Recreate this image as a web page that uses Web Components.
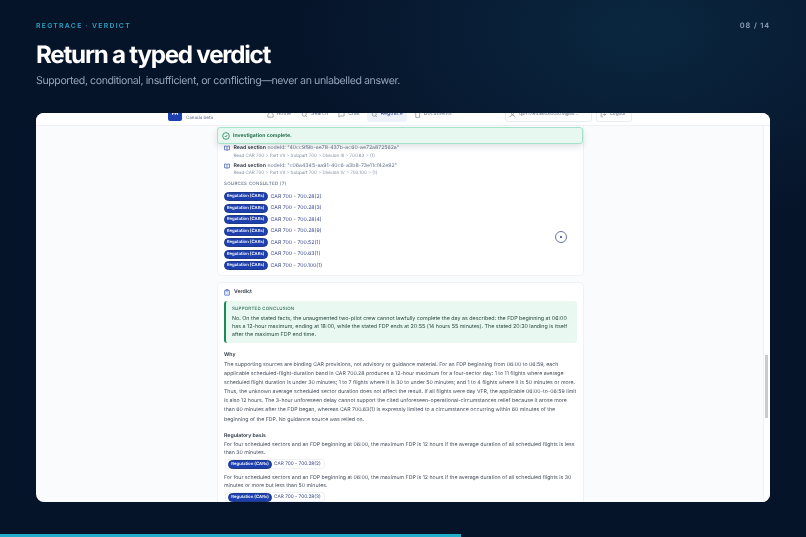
<!DOCTYPE html>
<html lang="en">
<head>
<meta charset="utf-8">
<title>Return a typed verdict</title>
<style>
  html, body { margin: 0; height: 100%; }
  body { background: #06142a; font-family: Inter, "Liberation Sans", sans-serif; text-rendering: geometricPrecision; overflow: hidden; }
</style>
</head>
<body>
<deck-slide>
  <slide-header slot="header" eyebrow="REGTRACE · VERDICT" page="08 / 14" heading="Return a typed verdict"
    sub="Supported, conditional, insufficient, or conflicting—never an unlabelled answer."></slide-header>
  <app-frame>
    <app-nav slot="nav"></app-nav>
    <section-card>
      <read-step node='"40cc9f9b-ae78-437b-ac60-ae72a872562a"' path="Read CAR 700 &gt; Part VII &gt; Subpart 700 &gt; Division III &gt; 700.63 &gt; (1)"></read-step>
      <read-step node='"c06a4345-aa91-40c6-a3b8-73e11cf42e92"' path="Read CAR 700 &gt; Part VII &gt; Subpart 700 &gt; Division IV &gt; 700.100 &gt; (1)"></read-step>
      <sources-list>
        <source-row ref="CAR 700 - 700.28(2)"></source-row>
        <source-row ref="CAR 700 - 700.28(3)"></source-row>
        <source-row ref="CAR 700 - 700.28(4)"></source-row>
        <source-row ref="CAR 700 - 700.28(9)"></source-row>
        <source-row ref="CAR 700 - 700.52(1)"></source-row>
        <source-row ref="CAR 700 - 700.63(1)"></source-row>
        <source-row ref="CAR 700 - 700.100(1)"></source-row>
      </sources-list>
    </section-card>
    <verdict-card>
      <verdict-callout>No. On the stated facts, the unaugmented two-pilot crew cannot lawfully complete the day as described: the FDP beginning at 06:00 has a 12-hour maximum, ending at 18:00, while the stated FDP ends at 20:55 (14 hours 55 minutes). The stated 20:30 landing is itself after the maximum FDP end time.</verdict-callout>
      <verdict-block heading="Why" style="--lh:9.17px">
        <p>The supporting sources are binding CAR provisions, not advisory or guidance material. For an FDP beginning from 06:00 to 06:59, each applicable scheduled-flight-duration band in CAR 700.28 produces a 12-hour maximum for a four-sector day: 1 to 11 flights where average scheduled flight duration is under 30 minutes; 1 to 7 flights where it is 30 to under 50 minutes; and 1 to 4 flights where it is 50 minutes or more. Thus, the unknown average scheduled sector duration does not affect the result. If all flights were day VFR, the applicable 06:00-to-06:59 limit is also 12 hours. The 3-hour unforeseen delay cannot support the cited unforeseen-operational-circumstances relief because it arose more than 60 minutes after the FDP began, whereas CAR 700.63(1) is expressly limited to a circumstance occurring within 60 minutes of the beginning of the FDP. No guidance source was relied on.</p>
      </verdict-block>
      <verdict-block heading="Regulatory basis" style="--lh:8px">
        <p>For four scheduled sectors and an FDP beginning at 06:00, the maximum FDP is 12 hours if the average duration of all scheduled flights is less than 30 minutes.</p>
        <source-chip ref="CAR 700 - 700.28(2)"></source-chip>
        <p>For four scheduled sectors and an FDP beginning at 06:00, the maximum FDP is 12 hours if the average duration of all scheduled flights is 30 minutes or more but less than 50 minutes.</p>
        <source-chip ref="CAR 700 - 700.28(3)"></source-chip>
      </verdict-block>
    </verdict-card>
  </app-frame>
</deck-slide>

<script>
function define(name, css, html) {
  customElements.define(name, class extends HTMLElement {
    constructor() {
      super();
      this.attachShadow({ mode: 'open' });
    }
    connectedCallback() {
      const attr = (n) => (this.getAttribute(n) || '').replace(/&/g, '&amp;').replace(/</g, '&lt;');
      this.shadowRoot.innerHTML = `<style>${css}</style>` + (typeof html === 'function' ? html(attr) : html);
    }
  });
}

const badge = `
  box-sizing: border-box; background: #1e40af; color: #fff; border-radius: 99px; font-weight: 600; white-space: nowrap;
  font-size: 4.3px; line-height: 7px; padding: 0 2.2px; border: 1px solid #1e3a8a; height: 9px;
`;

const ico = (d) => `<svg width="7" height="7" viewBox="0 0 24 24" fill="none" stroke="#6b7280" stroke-width="2">${d}</svg>`;

define('deck-slide', `
  :host {
    display: flex; flex-direction: column; box-sizing: border-box; width: 806px; height: 537px;
    padding: 20px 36px 0; overflow: hidden; position: relative;
    background: radial-gradient(ellipse 340px 200px at 640px 30px, #0a2740 0%, rgba(10,39,64,0) 100%), #06142a;
  }
  .progress { position: absolute; left: 0; bottom: 0; width: 461px; height: 3px; background: #22aecb; }
`, `<slot name="header"></slot><slot></slot><div class="progress"></div>`);

define('slide-header', `
  :host { display: block; color: #fff; height: 93px; filter: blur(.2px); }
  .top { display: flex; justify-content: space-between; align-items: center; height: 11px; }
  .eyebrow { font-size: 6.8px; font-weight: 600; letter-spacing: 1.3px; color: #2ba3bf; }
  .page { font-size: 7.4px; font-weight: 600; letter-spacing: .85px; color: #94a3b8; }
  h1 { margin: 8px 0 0; font-size: 24.2px; line-height: 32px; font-weight: 700; letter-spacing: -1.25px; color: #fff; }
  p { margin: 2px 0 0; font-size: 10.6px; line-height: 16px; letter-spacing: -.41px; color: #94a3b8; }
`, (a) => `
  <div class="top"><span class="eyebrow">${a('eyebrow')}</span><span class="page">${a('page')}</span></div>
  <h1>${a('heading')}</h1><p>${a('sub')}</p>`);

define('app-frame', `
  :host {
    display: block; height: 389px; width: 734px; background: #fafbfd; border-radius: 8px;
    overflow: hidden; position: relative;
  }
  .filter { filter: blur(.38px); height: 100%; }
  .col { width: 365px; margin-left: 182px; display: flex; flex-direction: column; gap: 8px; }
  .track { position: absolute; right: 0; top: 13px; bottom: 0; width: 7px; background: #fff; border-left: 1px solid #eef1f5; box-sizing: border-box; }
  .bar { position: absolute; right: 2px; top: 242px; width: 3px; height: 63px; background: #c8ccd1; }
  .toast {
    position: absolute; left: 181px; top: 14px; width: 366px; height: 17px; box-sizing: border-box;
    display: flex; align-items: center; gap: 3px; padding: 0 4px; border-radius: 3px;
    background: #e6f8f0; border: 1px solid #a7e3c8; box-shadow: 0 3px 6px rgba(15,23,42,.12);
    font-size: 5.2px; font-weight: 600; color: #14633f;
  }
  .pin {
    position: absolute; left: 519px; top: 118px; width: 12px; height: 12px; box-sizing: border-box;
    border: 1px solid #6a74a4; border-radius: 50%; background: #fff; display: grid; place-items: center;
  }
  .pin i { width: 2.5px; height: 2.5px; background: #1e3a8a; border-radius: 50%; }
`, `
  <div class="filter">
    <slot name="nav"></slot>
    <div class="col"><slot></slot></div>
    <div class="toast">
      <svg width="8" height="8" viewBox="0 0 24 24" fill="none" stroke="#16794c" stroke-width="2.2"><circle cx="12" cy="12" r="10"/><path d="M8 12l3 3 5-6"/></svg>
      Investigation complete.
    </div>
    <div class="pin"><i></i></div>
    <div class="track"></div>
    <div class="bar"></div>
  </div>`);

define('app-nav', `
  :host {
    display: flow-root; box-sizing: border-box; height: 13px; background: #fff;
    border-bottom: 1px solid #eef0f3; font-size: 5.2px; color: #64748b;
  }
  .clip { display: flex; align-items: center; height: 26px; margin-top: -12px; padding-left: 132px; box-sizing: border-box; }
  .logo { width: 14px; height: 14px; background: #1e40af; color: #fff; border-radius: 2px; font-size: 5px; font-weight: 700; display: grid; place-items: center; }
  .brand { margin-left: 4px; width: 28px; white-space: nowrap; font-size: 4.5px; color: #64748b; padding-top: 8px; }
  .links { display: flex; gap: 7px; margin-left: 51px; }
  .links span { padding: 1px 1.5px; display: flex; gap: 3px; align-items: center; }
  .links .on { background: #eef3fb; border-radius: 3px; color: #2b4a8f; padding: 4px 4px; margin: -3px -1.5px; }
  .user, .out { box-sizing: border-box; border: 1px solid #e9ecf1; border-radius: 3px; background: #fff; padding: 0 3px; display: flex; gap: 3px; align-items: center; height: 16px; font-size: 4.7px; white-space: nowrap; overflow: hidden; }
  .user { margin-left: 52px; width: 87px; }
  .out { margin-left: 4px; width: 36px; }
`, `
  <div class="clip">
    <div class="logo">FH</div><div class="brand">Canada beta</div>
    <div class="links">
      <span>${ico('<path d="M3 11l9-8 9 8v10H3z"/>')}Home</span>
      <span>${ico('<circle cx="11" cy="11" r="7"/><path d="M20 20l-4-4"/>')}Search</span>
      <span>${ico('<path d="M3 4h18v13H8l-5 4z"/>')}Chat</span>
      <span class="on">${ico('<circle cx="11" cy="11" r="7"/><path d="M20 20l-4-4"/>')}Regtrace</span>
      <span>${ico('<path d="M6 2h9l4 5v15H6z"/>')}Documents</span>
    </div>
    <div class="user">${ico('<circle cx="12" cy="8" r="4"/><path d="M4 21c1-5 5-7 8-7s7 2 8 7"/>')}qa+1784384344929@ex...</div>
    <div class="out">${ico('<path d="M10 4H4v16h6M15 8l4 4-4 4M19 12H9"/>')}Logout</div>
  </div>`);

define('section-card', `
  :host {
    display: flex; flex-direction: column; gap: 2.5px; background: #fff; padding: 19px 6px 5.5px;
    border-radius: 0 0 4px 4px; box-shadow: 0 0 0 1px #eef1f5;
  }
`, `<slot></slot>`);

define('read-step', `
  :host { display: grid; grid-template-columns: 6px 1fr; column-gap: 3.5px; font-size: 5.2px; line-height: 7.5px; color: #334155; }
  svg { margin-top: .4px; }
  b { font-weight: 600; color: #1f2937; }
  .n { color: #64748b; }
  .p { font-size: 4.5px; color: #8592a6; grid-column: 2; }
`, (a) => `
  <svg width="6" height="6" viewBox="0 0 24 24" fill="none" stroke="#1e40af" stroke-width="2.4"><path d="M12 6C9 4 6 4 2 4v15c4 0 7 0 10 2 3-2 6-2 10-2V4c-4 0-7 0-10 2zM12 6v15"/></svg>
  <div><b>Read section</b> <span class="n">nodeId: ${a('node')}</span></div>
  <div class="p">${a('path')}</div>`);

define('sources-list', `
  :host { display: flex; flex-direction: column; gap: 3.5px; margin-top: .5px; }
  .t { font-size: 4.5px; font-weight: 500; letter-spacing: .25px; color: #64748b; line-height: 7px; margin-bottom: 1.5px; }
`, `<div class="t">SOURCES CONSULTED (7)</div><slot></slot>`);

define('source-row', `
  :host { display: flex; align-items: center; gap: 3px; height: 8px; font-size: 5.2px; color: #3b4a8c; margin-left: -.5px; }
  .b { ${badge} }
`, (a) => `<span class="b">Regulation (CARs)</span><span>${a('ref')}</span>`);

define('source-chip', `
  :host {
    display: flex; width: max-content; align-items: center; gap: 2px; height: 10px; box-sizing: border-box; padding: 0 3px 0 2px; margin: 2px 0 5px 1px;
    border: 1px solid #eef1f5; border-radius: 3px; font-size: 4.75px; line-height: 7px; color: #3b4a8c;
  }
  .b { ${badge} }
`, (a) => `<span class="b">Regulation (CARs)</span><span>${a('ref')}</span>`);

define('verdict-card', `
  :host {
    display: flex; flex-direction: column; background: #fff; padding: 5px 6px 6px; border-radius: 4px;
    box-shadow: 0 0 0 1px #eef1f5;
  }
  .h { display: flex; align-items: center; gap: 4px; font-size: 5.2px; font-weight: 600; color: #1f2937; line-height: 8px; margin-bottom: 5px; }
`, `
  <div class="h"><svg width="6" height="7" viewBox="0 0 22 24" fill="#dbe5fb" stroke="#1e40af" stroke-width="2"><rect x="2" y="4" width="18" height="18" rx="2"/><rect x="7" y="1" width="8" height="5" rx="1"/></svg>Verdict</div>
  <slot></slot>`);

define('verdict-callout', `
  :host {
    display: block; background: #e9f9f1; border-left: 2px solid #178a5c; border-radius: 3px;
    padding: 4.5px 6px 4px 6px; font-size: 5.35px; line-height: 8px; color: #2b4a42; margin-bottom: 8.3px;
  }
  .l { font-size: 4.4px; letter-spacing: .25px; font-weight: 500; line-height: 7px; margin-bottom: 2.3px; color: #2f6b55; }
`, `<div class="l">SUPPORTED CONCLUSION</div><slot></slot>`);

define('verdict-block', `
  :host { display: block; margin-bottom: 7px; padding-right: .5px; font-size: 5.22px; line-height: var(--lh, 8px); color: #414b59; }
  h4 { margin: 0 0 1.5px; font-size: 5.2px; font-weight: 600; line-height: 8px; color: #1f2937; }
  ::slotted(p) { margin: 0; }
`, (a) => `<h4>${a('heading')}</h4><slot></slot>`);
</script>
</body>
</html>
